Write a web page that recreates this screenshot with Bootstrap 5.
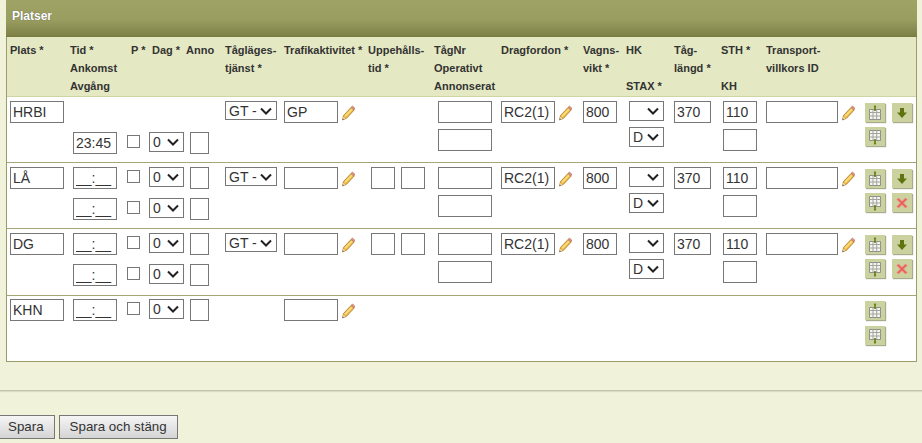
<!DOCTYPE html>
<html lang="sv">
<head>
<meta charset="utf-8">
<title>Platser</title>
<link href="https://cdn.jsdelivr.net/npm/bootstrap@5.3.0/dist/css/bootstrap.min.css" rel="stylesheet">
<style>
html,body{height:443px;overflow:hidden}
body{background:#f0f2d9;font-family:"Liberation Sans",Arial,sans-serif;color:#222;font-size:14px}
.sheet{height:391px;padding:0 5px 0 6px;border-bottom:1px solid #c3c5ac;box-shadow:0 1px 1px #d9dbc3}
.headbar{height:37px;background:linear-gradient(#a0a366,#9a9d60 55%,#7e8146);color:#fff;font-weight:700;font-size:12px;padding:9px 6px 0;line-height:14px;text-shadow:0 0 1px #555;border-bottom:1px solid #77793f}
.stops{width:911px;table-layout:fixed;border-collapse:separate;border-spacing:0;background:#fff;border-left:1px solid #9a9c6a;border-right:1px solid #9a9c6a;border-bottom:1px solid #9a9c6a}
.stops th{background:#e5e9c3;font-size:11px;line-height:18px;font-weight:700;vertical-align:top;padding:4px 0 0 3px;height:60px;white-space:nowrap;color:#333;border-bottom:1px solid #cfd3a6}
.stops td{vertical-align:top;padding:0 0 0 3px;white-space:nowrap}
.upper td{height:30px;padding-top:4px}
.upper.final td{padding-top:3px}
.lower td{height:36px;border-bottom:1px solid #a5a777}
.lower.tall td{height:37px}
.lower.last td{border-bottom:0;height:35px}
.fld{display:block;height:22px;border:1px solid #777;border-radius:0;background:#fff;padding:0 2px;font:14px "Liberation Sans",Arial,sans-serif;color:#333;outline:0}
select.fld{height:19px;padding:0 0 0 3px;appearance:none;background:#fff url("data:image/svg+xml,%3Csvg xmlns='http://www.w3.org/2000/svg' width='12' height='8'%3E%3Cpath d='M1 1.500 6 6.500 11 1.500' fill='none' stroke='%23222' stroke-width='2'/%3E%3C/svg%3E") no-repeat right 4px center}
.w54{width:54px}.w44{width:44px}.w19{width:19px}.w24{width:24px}.w34{width:34px}.w37{width:37px}.w72{width:72px}
select.sel35{width:35px;height:20px}.sel52{width:52px}
.tick{display:block;appearance:none;width:13px;height:13px;border:1px solid #777;background:#fff;margin:0}
.l3{margin-left:3px}.l4{margin-left:4px}.l2{margin-left:2px}.ln3{margin-left:-3px}.ln4{margin-left:-4px}
.t0{margin-top:0}.t2{margin-top:2px}.t3{margin-top:3px}.t5{margin-top:5px}.t8{margin-top:8px}
.withpen{display:flex;align-items:flex-start;gap:3px}
.pen{width:14px;height:16px;flex:none;margin-top:4px}
.pair{display:flex;gap:6px}
.tools{display:flex;gap:7px;margin-left:2px}
.upper .tools{margin-top:2px}
.tool{width:20px;height:19px;padding:0;border:0;border-radius:0;background:#ccd29f;box-shadow:1px 1px 1px #a9ab8f;display:flex;align-items:center;justify-content:center}
.tool svg{display:block}
.actions{display:flex;gap:4px;margin:24px 0 0 -3px}
.act{height:24px;padding:0 10px;border:1px solid #777;border-radius:0;background:linear-gradient(#f5f5f5,#d4d4d4);font-size:13.33px;line-height:20px;color:#333}
.act:hover{background:#ddd;border-color:#777;color:#333}
</style>
</head>
<body>
<svg width="0" height="0" class="position-absolute">
<defs>
<symbol id="pencil" viewBox="0 0 14 16">
<path d="M1.500 15 2.500 10.500 10 2.500 13 5.200 5.500 13.300Z" fill="#efb73f" stroke="#a9762b" stroke-width=".8"/>
<path d="M3.500 10.500 10.700 3.200 12 4.500 4.800 12Z" fill="#f9dc7c"/>
<path d="M10 2.500 11.400 1 13.700 3 13 5.200Z" fill="#e6927f" stroke="#a96a50" stroke-width=".6"/>
<path d="M1.500 15 2.300 11.800 4.300 13.700Z" fill="#efdcb4"/>
<path d="M1.500 15 1.900 13.500 3 14.300Z" fill="#444"/>
</symbol>
<symbol id="gridup" viewBox="0 0 20 20">
<path d="M4.500 6.500H15.500V16.500H4.500Z" fill="#f4f4f0" stroke="#8f9089"/>
<path d="M4.500 9.500H15.500M4.500 13H15.500M8 6.500V16.500M11.700 6.500V16.500" stroke="#a3a49d" fill="none"/>
<path d="M8.600 3.800 10 2 11.400 3.800H10.800V8H9.200V3.800Z" fill="#5f7d12"/>
</symbol>
<symbol id="griddown" viewBox="0 0 20 20">
<path d="M4.500 3.500H15.500V13.500H4.500Z" fill="#f4f4f0" stroke="#8f9089"/>
<path d="M4.500 6.500H15.500M4.500 10H15.500M8 3.500V13.500M11.700 3.500V13.500" stroke="#a3a49d" fill="none"/>
<path d="M8.600 16.200 10 18 11.400 16.200H10.800V12H9.200V16.200Z" fill="#5f7d12"/>
</symbol>
<symbol id="down" viewBox="0 0 20 20">
<path d="M8 5H12V9.500H15L10 15 5 9.500H8Z" fill="#5e7410"/>
</symbol>
<symbol id="cross" viewBox="0 0 20 20">
<path d="M5 6.500 6.500 5 10 8.500 13.500 5 15 6.500 11.500 10 15 13.500 13.500 15 10 11.500 6.500 15 5 13.500 8.500 10Z" fill="#ea5a55" stroke="#f08d88" stroke-width="1"/>
</symbol>
</defs>
</svg>

<div class="sheet">
<div class="headbar">Platser</div>
<table class="stops">
<colgroup>
<col style="width:60px"><col style="width:61px"><col style="width:21px"><col style="width:34px"><col style="width:39px"><col style="width:59px"><col style="width:84px"><col style="width:66px"><col style="width:67px"><col style="width:82px"><col style="width:43px"><col style="width:48px"><col style="width:47px"><col style="width:45px"><col style="width:97px"><col style="width:56px">
</colgroup>
<thead>
<tr>
<th>Plats *</th><th>Tid *<br>Ankomst<br>Avgång</th><th>P *</th><th>Dag *</th><th>Anno</th><th>Tågläges-<br>tjänst *</th><th>Trafikaktivitet *</th><th>Uppehålls-<br>tid *</th><th>TågNr<br>Operativt<br>Annonserat</th><th>Dragfordon *</th><th>Vagns-<br>vikt *</th><th>HK<br><br>STAX *</th><th>Tåg-<br>längd *</th><th>STH *<br><br>KH</th><th>Transport-<br>villkors ID</th><th></th>
</tr>
</thead>
<tbody>
<!-- HRBI -->
<tr class="upper">
<td><input class="fld w54" value="HRBI"></td><td></td><td></td><td></td><td></td>
<td><select class="fld sel52"><option>GT -</option></select></td>
<td><div class="withpen"><input class="fld w54" value="GP"><svg class="pen"><use href="#pencil"/></svg></div></td>
<td></td>
<td><input class="fld w54 l4"></td>
<td><div class="withpen"><input class="fld w54" value="RC2(1)"><svg class="pen"><use href="#pencil"/></svg></div></td>
<td><input class="fld w34" value="800"></td>
<td><select class="fld sel35 l3"><option></option></select></td>
<td><input class="fld w37" value="370"></td>
<td><input class="fld w34 l2" value="110"></td>
<td><div class="withpen"><input class="fld w72" value=""><svg class="pen"><use href="#pencil"/></svg></div></td>
<td><div class="tools"><button class="btn tool" type="button" aria-label="Infoga före"><svg width="20" height="20"><use href="#gridup"/></svg></button><button class="btn tool" type="button" aria-label="Flytta ned"><svg width="20" height="20"><use href="#down"/></svg></button></div></td>
</tr>
<tr class="lower">
<td></td>
<td><input class="fld w44 l3 t5" value="23:45"></td>
<td><input class="tick ln4 t8" type="checkbox" aria-label="P"></td>
<td><select class="fld sel35 ln3 t5"><option>0</option></select></td>
<td><input class="fld w19 l4 t5"></td>
<td></td><td></td><td></td>
<td><input class="fld w54 l4 t2"></td>
<td></td><td></td>
<td><select class="fld sel35 l3"><option>D</option></select></td>
<td></td>
<td><input class="fld w34 l2 t2"></td>
<td></td>
<td><div class="tools"><button class="btn tool" type="button" aria-label="Infoga efter"><svg width="20" height="20"><use href="#griddown"/></svg></button></div></td>
</tr>
<!-- LÅ -->
<tr class="upper">
<td><input class="fld w54" value="LÅ"></td>
<td><input class="fld w44 l3" value="__:__"></td>
<td><input class="tick ln4 t3" type="checkbox" aria-label="P"></td>
<td><select class="fld sel35 ln3"><option>0</option></select></td>
<td><input class="fld w19 l4"></td>
<td><select class="fld sel52"><option>GT -</option></select></td>
<td><div class="withpen"><input class="fld w54"><svg class="pen"><use href="#pencil"/></svg></div></td>
<td><div class="pair l3"><input class="fld w24"><input class="fld w24"></div></td>
<td><input class="fld w54 l4"></td>
<td><div class="withpen"><input class="fld w54" value="RC2(1)"><svg class="pen"><use href="#pencil"/></svg></div></td>
<td><input class="fld w34" value="800"></td>
<td><select class="fld sel35 l3"><option></option></select></td>
<td><input class="fld w37" value="370"></td>
<td><input class="fld w34 l2" value="110"></td>
<td><div class="withpen"><input class="fld w72"><svg class="pen"><use href="#pencil"/></svg></div></td>
<td><div class="tools"><button class="btn tool" type="button" aria-label="Infoga före"><svg width="20" height="20"><use href="#gridup"/></svg></button><button class="btn tool" type="button" aria-label="Flytta ned"><svg width="20" height="20"><use href="#down"/></svg></button></div></td>
</tr>
<tr class="lower">
<td></td>
<td><input class="fld w44 l3 t5" value="__:__"></td>
<td><input class="tick ln4 t8" type="checkbox" aria-label="P"></td>
<td><select class="fld sel35 ln3 t5"><option>0</option></select></td>
<td><input class="fld w19 l4 t5"></td>
<td></td><td></td><td></td>
<td><input class="fld w54 l4 t2"></td>
<td></td><td></td>
<td><select class="fld sel35 l3"><option>D</option></select></td>
<td></td>
<td><input class="fld w34 l2 t2"></td>
<td></td>
<td><div class="tools"><button class="btn tool" type="button" aria-label="Infoga efter"><svg width="20" height="20"><use href="#griddown"/></svg></button><button class="btn tool" type="button" aria-label="Ta bort"><svg width="20" height="20"><use href="#cross"/></svg></button></div></td>
</tr>
<!-- DG -->
<tr class="upper">
<td><input class="fld w54" value="DG"></td>
<td><input class="fld w44 l3" value="__:__"></td>
<td><input class="tick ln4 t3" type="checkbox" aria-label="P"></td>
<td><select class="fld sel35 ln3"><option>0</option></select></td>
<td><input class="fld w19 l4"></td>
<td><select class="fld sel52"><option>GT -</option></select></td>
<td><div class="withpen"><input class="fld w54"><svg class="pen"><use href="#pencil"/></svg></div></td>
<td><div class="pair l3"><input class="fld w24"><input class="fld w24"></div></td>
<td><input class="fld w54 l4"></td>
<td><div class="withpen"><input class="fld w54" value="RC2(1)"><svg class="pen"><use href="#pencil"/></svg></div></td>
<td><input class="fld w34" value="800"></td>
<td><select class="fld sel35 l3"><option></option></select></td>
<td><input class="fld w37" value="370"></td>
<td><input class="fld w34 l2" value="110"></td>
<td><div class="withpen"><input class="fld w72"><svg class="pen"><use href="#pencil"/></svg></div></td>
<td><div class="tools"><button class="btn tool" type="button" aria-label="Infoga före"><svg width="20" height="20"><use href="#gridup"/></svg></button><button class="btn tool" type="button" aria-label="Flytta ned"><svg width="20" height="20"><use href="#down"/></svg></button></div></td>
</tr>
<tr class="lower tall">
<td></td>
<td><input class="fld w44 l3 t5" value="__:__"></td>
<td><input class="tick ln4 t8" type="checkbox" aria-label="P"></td>
<td><select class="fld sel35 ln3 t5"><option>0</option></select></td>
<td><input class="fld w19 l4 t5"></td>
<td></td><td></td><td></td>
<td><input class="fld w54 l4 t2"></td>
<td></td><td></td>
<td><select class="fld sel35 l3"><option>D</option></select></td>
<td></td>
<td><input class="fld w34 l2 t2"></td>
<td></td>
<td><div class="tools"><button class="btn tool" type="button" aria-label="Infoga efter"><svg width="20" height="20"><use href="#griddown"/></svg></button><button class="btn tool" type="button" aria-label="Ta bort"><svg width="20" height="20"><use href="#cross"/></svg></button></div></td>
</tr>
<!-- KHN -->
<tr class="upper final">
<td><input class="fld w54" value="KHN"></td>
<td><input class="fld w44 l3" value="__:__"></td>
<td><input class="tick ln4 t3" type="checkbox" aria-label="P"></td>
<td><select class="fld sel35 ln3"><option>0</option></select></td>
<td><input class="fld w19 l4"></td>
<td></td>
<td><div class="withpen"><input class="fld w54"><svg class="pen"><use href="#pencil"/></svg></div></td>
<td></td><td></td><td></td><td></td><td></td><td></td><td></td><td></td>
<td><div class="tools"><button class="btn tool" type="button" aria-label="Infoga före"><svg width="20" height="20"><use href="#gridup"/></svg></button></div></td>
</tr>
<tr class="lower last">
<td></td><td></td><td></td><td></td><td></td><td></td><td></td><td></td><td></td><td></td><td></td><td></td><td></td><td></td><td></td>
<td><div class="tools"><button class="btn tool" type="button" aria-label="Infoga efter"><svg width="20" height="20"><use href="#griddown"/></svg></button></div></td>
</tr>
</tbody>
</table>
</div>
<div class="actions">
<button class="btn act" type="button">Spara</button>
<button class="btn act" type="button">Spara och stäng</button>
</div>
</body>
</html>
